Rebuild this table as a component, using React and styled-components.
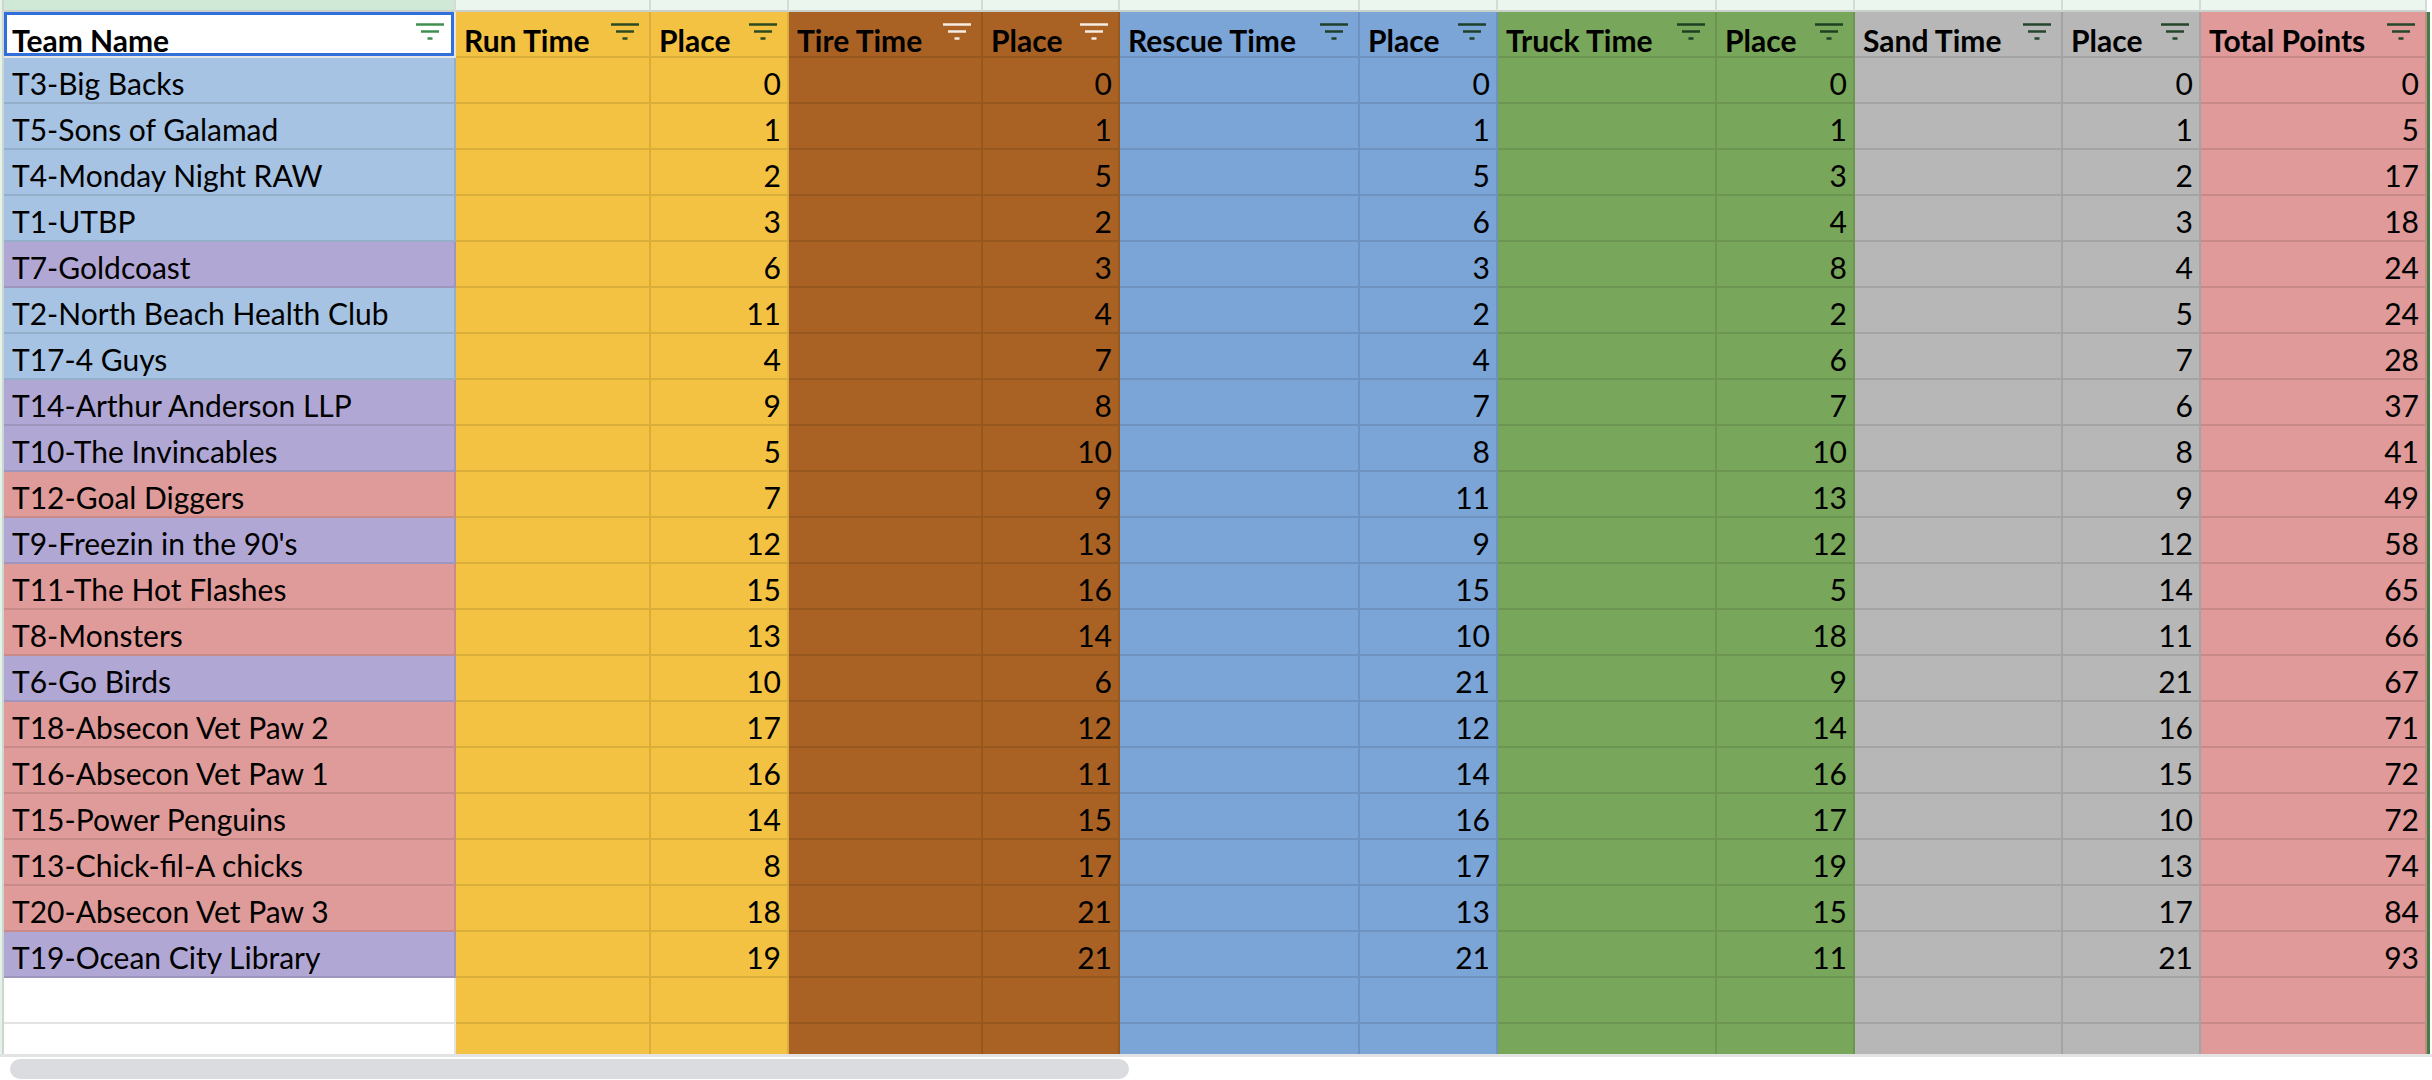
import styled, { createGlobalStyle } from 'styled-components';

const GlobalStyle = createGlobalStyle`
  html, body {
    margin: 0;
    padding: 0;
    background: #fff;
    overflow: hidden;
  }
  body {
    font-family: Lato, "Liberation Sans", sans-serif;
  }
`;

const TEAM_COLORS = {
  blue: '#a6c3e3',
  purple: '#b1a7d4',
  red: '#df9b99',
};

const columns = [
  { label: 'Team Name', width: 452, bg: '#ffffff', icon: '#3f8f50' },
  { label: 'Run Time', width: 195, bg: '#f3c242', icon: '#2c4a22' },
  { label: 'Place', width: 138, bg: '#f3c242', icon: '#2c4a22', key: 0 },
  { label: 'Tire Time', width: 194, bg: '#a96224', icon: '#f7ece2' },
  { label: 'Place', width: 137, bg: '#a96224', icon: '#f7ece2', key: 1 },
  { label: 'Rescue Time', width: 240, bg: '#7ba4d7', icon: '#1f3f2a' },
  { label: 'Place', width: 138, bg: '#7ba4d7', icon: '#1f3f2a', key: 2 },
  { label: 'Truck Time', width: 219, bg: '#78a65a', icon: '#1f3f22' },
  { label: 'Place', width: 138, bg: '#78a65a', icon: '#1f3f22', key: 3 },
  { label: 'Sand Time', width: 208, bg: '#b7b7b7', icon: '#24462b' },
  { label: 'Place', width: 138, bg: '#b7b7b7', icon: '#24462b', key: 4 },
  { label: 'Total Points', width: 226, bg: '#df9a99', icon: '#24462b', key: 5 },
];

const teams = [
  ['T3-Big Backs', 'blue', 0, 0, 0, 0, 0, 0],
  ['T5-Sons of Galamad', 'blue', 1, 1, 1, 1, 1, 5],
  ['T4-Monday Night RAW', 'blue', 2, 5, 5, 3, 2, 17],
  ['T1-UTBP', 'blue', 3, 2, 6, 4, 3, 18],
  ['T7-Goldcoast', 'purple', 6, 3, 3, 8, 4, 24],
  ['T2-North Beach Health Club', 'blue', 11, 4, 2, 2, 5, 24],
  ['T17-4 Guys', 'blue', 4, 7, 4, 6, 7, 28],
  ['T14-Arthur Anderson LLP', 'purple', 9, 8, 7, 7, 6, 37],
  ['T10-The Invincables', 'purple', 5, 10, 8, 10, 8, 41],
  ['T12-Goal Diggers', 'red', 7, 9, 11, 13, 9, 49],
  ["T9-Freezin in the 90's", 'purple', 12, 13, 9, 12, 12, 58],
  ['T11-The Hot Flashes', 'red', 15, 16, 15, 5, 14, 65],
  ['T8-Monsters', 'red', 13, 14, 10, 18, 11, 66],
  ['T6-Go Birds', 'purple', 10, 6, 21, 9, 21, 67],
  ['T18-Absecon Vet Paw 2', 'red', 17, 12, 12, 14, 16, 71],
  ['T16-Absecon Vet Paw 1', 'red', 16, 11, 14, 16, 15, 72],
  ['T15-Power Penguins', 'red', 14, 15, 16, 17, 10, 72],
  ['T13-Chick-fil-A chicks', 'red', 8, 17, 17, 19, 13, 74],
  ['T20-Absecon Vet Paw 3', 'red', 18, 21, 13, 15, 17, 84],
  ['T19-Ocean City Library', 'purple', 19, 21, 21, 11, 21, 93],
];

const FilterIcon = ({ color }) => (
  <svg width="28" height="18" viewBox="0 0 28 18">
    <line x1="0" y1="1.5" x2="28" y2="1.5" stroke={color} strokeWidth="2.5" />
    <line x1="5" y1="8.5" x2="23" y2="8.5" stroke={color} strokeWidth="2.5" />
    <line x1="11.5" y1="15.5" x2="16.5" y2="15.5" stroke={color} strokeWidth="2.5" />
  </svg>
);

const App = () => {
  const template = columns.map((c) => `${c.width}px`).join(' ');

  return (
    <>
      <GlobalStyle />
      <Sheet>
        <GridArea>
          <RowGutter />
          <Table $template={template}>
            {columns.map((c, i) => (
              <ColumnLetter key={`l${i}`} $selected={i === 0} />
            ))}

            {columns.map((c, i) => (
              <HeaderCell key={`h${i}`} $bg={c.bg} $selected={i === 0}>
                <span>{c.label}</span>
                <FilterIcon color={c.icon} />
              </HeaderCell>
            ))}

            {teams.map((t) =>
              columns.map((c, i) => {
                if (i === 0) {
                  return (
                    <Cell key={`${t[0]}-${i}`} $bg={TEAM_COLORS[t[1]]}>
                      {t[0]}
                    </Cell>
                  );
                }
                return (
                  <Cell key={`${t[0]}-${i}`} $bg={c.bg} $numeric>
                    {c.key !== undefined ? t[2 + c.key] : ''}
                  </Cell>
                );
              })
            )}

            {[0, 1].map((r) =>
              columns.map((c, i) => (
                <Cell key={`e${r}-${i}`} $bg={c.bg} $empty={i === 0} />
              ))
            )}
          </Table>
          <RangeEdge />
        </GridArea>
        <ScrollTrack>
          <ScrollThumb />
        </ScrollTrack>
      </Sheet>
    </>
  );
};

const Sheet = styled.div`
  display: flex;
  flex-direction: column;
  width: 2432px;
  height: 1080px;
  overflow: hidden;
  background: #fff;
`;

const GridArea = styled.div`
  display: flex;
  height: 1054px;
  flex: 0 0 1054px;
  overflow: hidden;
`;

const RowGutter = styled.div`
  width: 2px;
  flex: 0 0 2px;
  background: #e2f3e7;
  border-right: 2px solid #cfd6d1;
`;

const Table = styled.div`
  display: grid;
  grid-template-columns: ${(p) => p.$template};
  grid-auto-rows: 46px;
  grid-template-rows: 12px 46px;
  align-content: start;
`;

const RangeEdge = styled.div`
  width: 3px;
  flex: 0 0 3px;
  margin-top: 12px;
  background: #3f7f45;
`;

const ColumnLetter = styled.div`
  background: ${(p) => (p.$selected ? '#cfe9d6' : '#eaf6ee')};
  border-right: 2px solid #d3ddd6;
  border-bottom: 2px solid #c9cfcb;
`;

const HeaderCell = styled.div`
  display: flex;
  align-items: center;
  justify-content: space-between;
  padding: 0 10px 0 8px;
  background: ${(p) => p.$bg};
  border-right: 2px solid rgba(0, 0, 0, 0.1);
  border-bottom: 2px solid rgba(0, 0, 0, 0.1);
  box-shadow: ${(p) => (p.$selected ? 'inset 0 0 0 3px #3170db' : 'none')};
  font-family: Lato, "Liberation Sans", sans-serif;
  font-weight: 700;
  font-size: 30px;
  color: #000;
  white-space: nowrap;
  overflow: hidden;

  span {
    padding-top: 12px;
  }

  svg {
    flex: 0 0 auto;
    margin-bottom: 4px;
  }
`;

const Cell = styled.div`
  display: flex;
  align-items: center;
  justify-content: ${(p) => (p.$numeric ? 'flex-end' : 'flex-start')};
  padding: 5px 6px 0 8px;
  background: ${(p) => (p.$empty ? '#ffffff' : p.$bg)};
  border-right: 2px solid ${(p) => (p.$empty ? '#e3e3e3' : 'rgba(0, 0, 0, 0.1)')};
  border-bottom: 2px solid ${(p) => (p.$empty ? '#e3e3e3' : 'rgba(0, 0, 0, 0.1)')};
  font-family: Lato, "Liberation Sans", sans-serif;
  font-size: 30px;
  color: #000;
  white-space: nowrap;
  overflow: hidden;
`;

const ScrollTrack = styled.div`
  display: flex;
  align-items: flex-end;
  height: 26px;
  flex: 0 0 26px;
  border-top: 3px solid #e3e3e3;
  padding: 0 0 1px 10px;
  box-sizing: border-box;
  background: #fff;
`;

const ScrollThumb = styled.div`
  width: 1119px;
  height: 20px;
  border-radius: 10px;
  background: #dadce0;
`;

export default App;
